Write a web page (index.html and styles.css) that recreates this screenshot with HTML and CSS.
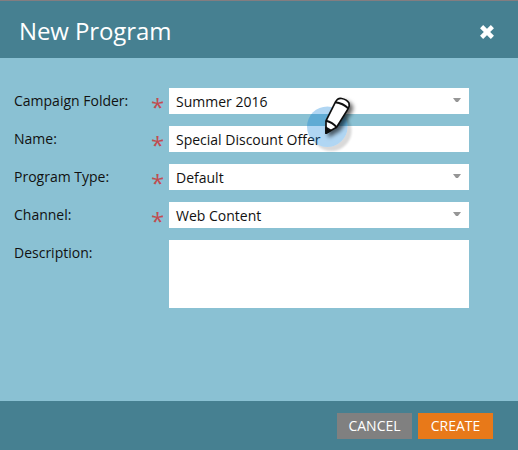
FILE: index.html
```html
<!DOCTYPE html>
<html lang="en">
<head>
<meta charset="utf-8">
<title>New Program</title>
<link rel="stylesheet" href="styles.css">
</head>
<body>
<div class="dialog">
  <header class="header">
    <h1 class="title">New Program</h1>
    <svg class="close" viewBox="0 0 16 16"><path d="M2.6 2.6 13.4 13.4M13.4 2.6 2.6 13.4" stroke="#fff" stroke-width="4.4"/></svg>
  </header>
  <main class="form">
    <div class="row"><span class="label">Campaign Folder:</span><span class="req">*</span><div class="field"><span class="value">Summer 2016</span><i class="arrow"></i></div></div>
    <div class="row"><span class="label">Name:</span><span class="req">*</span><div class="field"><span class="value">Special Discount Offer</span></div></div>
    <div class="row"><span class="label">Program Type:</span><span class="req">*</span><div class="field"><span class="value">Default</span><i class="arrow"></i></div></div>
    <div class="row"><span class="label">Channel:</span><span class="req">*</span><div class="field"><span class="value">Web Content</span><i class="arrow"></i></div></div>
    <div class="row"><span class="label">Description:</span><span class="req"></span><div class="field area"></div></div>
  </main>
  <footer class="footer">
    <button class="button cancel">CANCEL</button>
    <button class="button create">CREATE</button>
  </footer>
  <svg class="cursor" viewBox="300 90 65 65">
    <defs>
      <filter id="soft" x="-40%" y="-40%" width="200%" height="200%"><feDropShadow dx="3" dy="3" stdDeviation="2" flood-color="#000" flood-opacity=".6"/></filter>
      <filter id="blur" x="-30%" y="-30%" width="160%" height="160%"><feGaussianBlur stdDeviation="1.3"/></filter>
      <mask id="outside" maskUnits="userSpaceOnUse" x="300" y="90" width="65" height="65"><path d="M300 90h65v65h-65z" fill="#fff"/><circle cx="327.3" cy="126.7" r="20.3"/></mask>
    </defs>
    <g mask="url(#outside)"><circle cx="331.3" cy="130.7" r="20.3" opacity=".15" filter="url(#blur)"/></g>
    <circle cx="327.3" cy="126.7" r="20.3" fill="#007bd8" opacity=".31"/>
    <g filter="url(#soft)" stroke="#111" stroke-width="1.7" stroke-linejoin="round">
      <path d="M326 133.2V120.8L335.4 102.2Q337.5 98 341.5 98.5 347 99.3 349 103.2 349.8 106 348.2 108.6L336.6 127.2Z" fill="#fff"/>
      <path d="M326 120.8Q332.5 122.5 336.6 127.2M335.2 102.3Q343 103.3 348.4 108.4" fill="none" stroke-width="2"/>
      <path d="M326 133.2V127.4L330.5 130.2Z" fill="#111"/>
    </g>
  </svg>
</div>
</body>
</html>
```
FILE: styles.css
```css
* { box-sizing: border-box; }
body { margin: 0; font-family: "Open Sans", sans-serif; font-size: 14px; color: #111; }
.dialog { position: relative; width: 518px; height: 450px; display: flex; flex-direction: column; background: #8ac1d3; }
.header { height: 58px; flex: none; background: #468091; border-top: 1px solid #837d80; display: flex; align-items: center; justify-content: space-between; padding: 4px 23px 0 19px; }
.title { margin: 0 0 2px; font-size: 24px; letter-spacing: -.1px; line-height: 34px; font-weight: 400; color: #fff; }
.close { width: 16px; height: 16px; }
.form { flex: 1; padding: 30px 49px 0 14px; display: flex; flex-direction: column; gap: 12px; }
.row { display: grid; grid-template-columns: 137px 18px 300px; }
.label { line-height: 25px; white-space: nowrap; }
.req { color: #c14d50; font-size: 24px; line-height: 26px; height: 26px; padding-top: 6px; }
.field { height: 26px; background: #fff; padding: 0 8px 0 7px; display: flex; justify-content: space-between; line-height: 27px; }
.area { height: 68px; }
.arrow { width: 8px; height: 4px; margin-top: 10px; background: #969696; clip-path: polygon(0 0, 100% 0, 62% 100%, 38% 100%); }
.footer { height: 49px; flex: none; background: #468091; display: flex; justify-content: flex-end; gap: 6px; padding: 12px 25px 0 0; }
.button { width: 75px; height: 26px; border: 0; padding: 0; color: #fff; font: 14px/26px "Open Sans", sans-serif; }
.cancel { background: #808080; }
.create { background: #e87919; }
.cursor { position: absolute; left: 300px; top: 90px; width: 65px; height: 65px; }
```
